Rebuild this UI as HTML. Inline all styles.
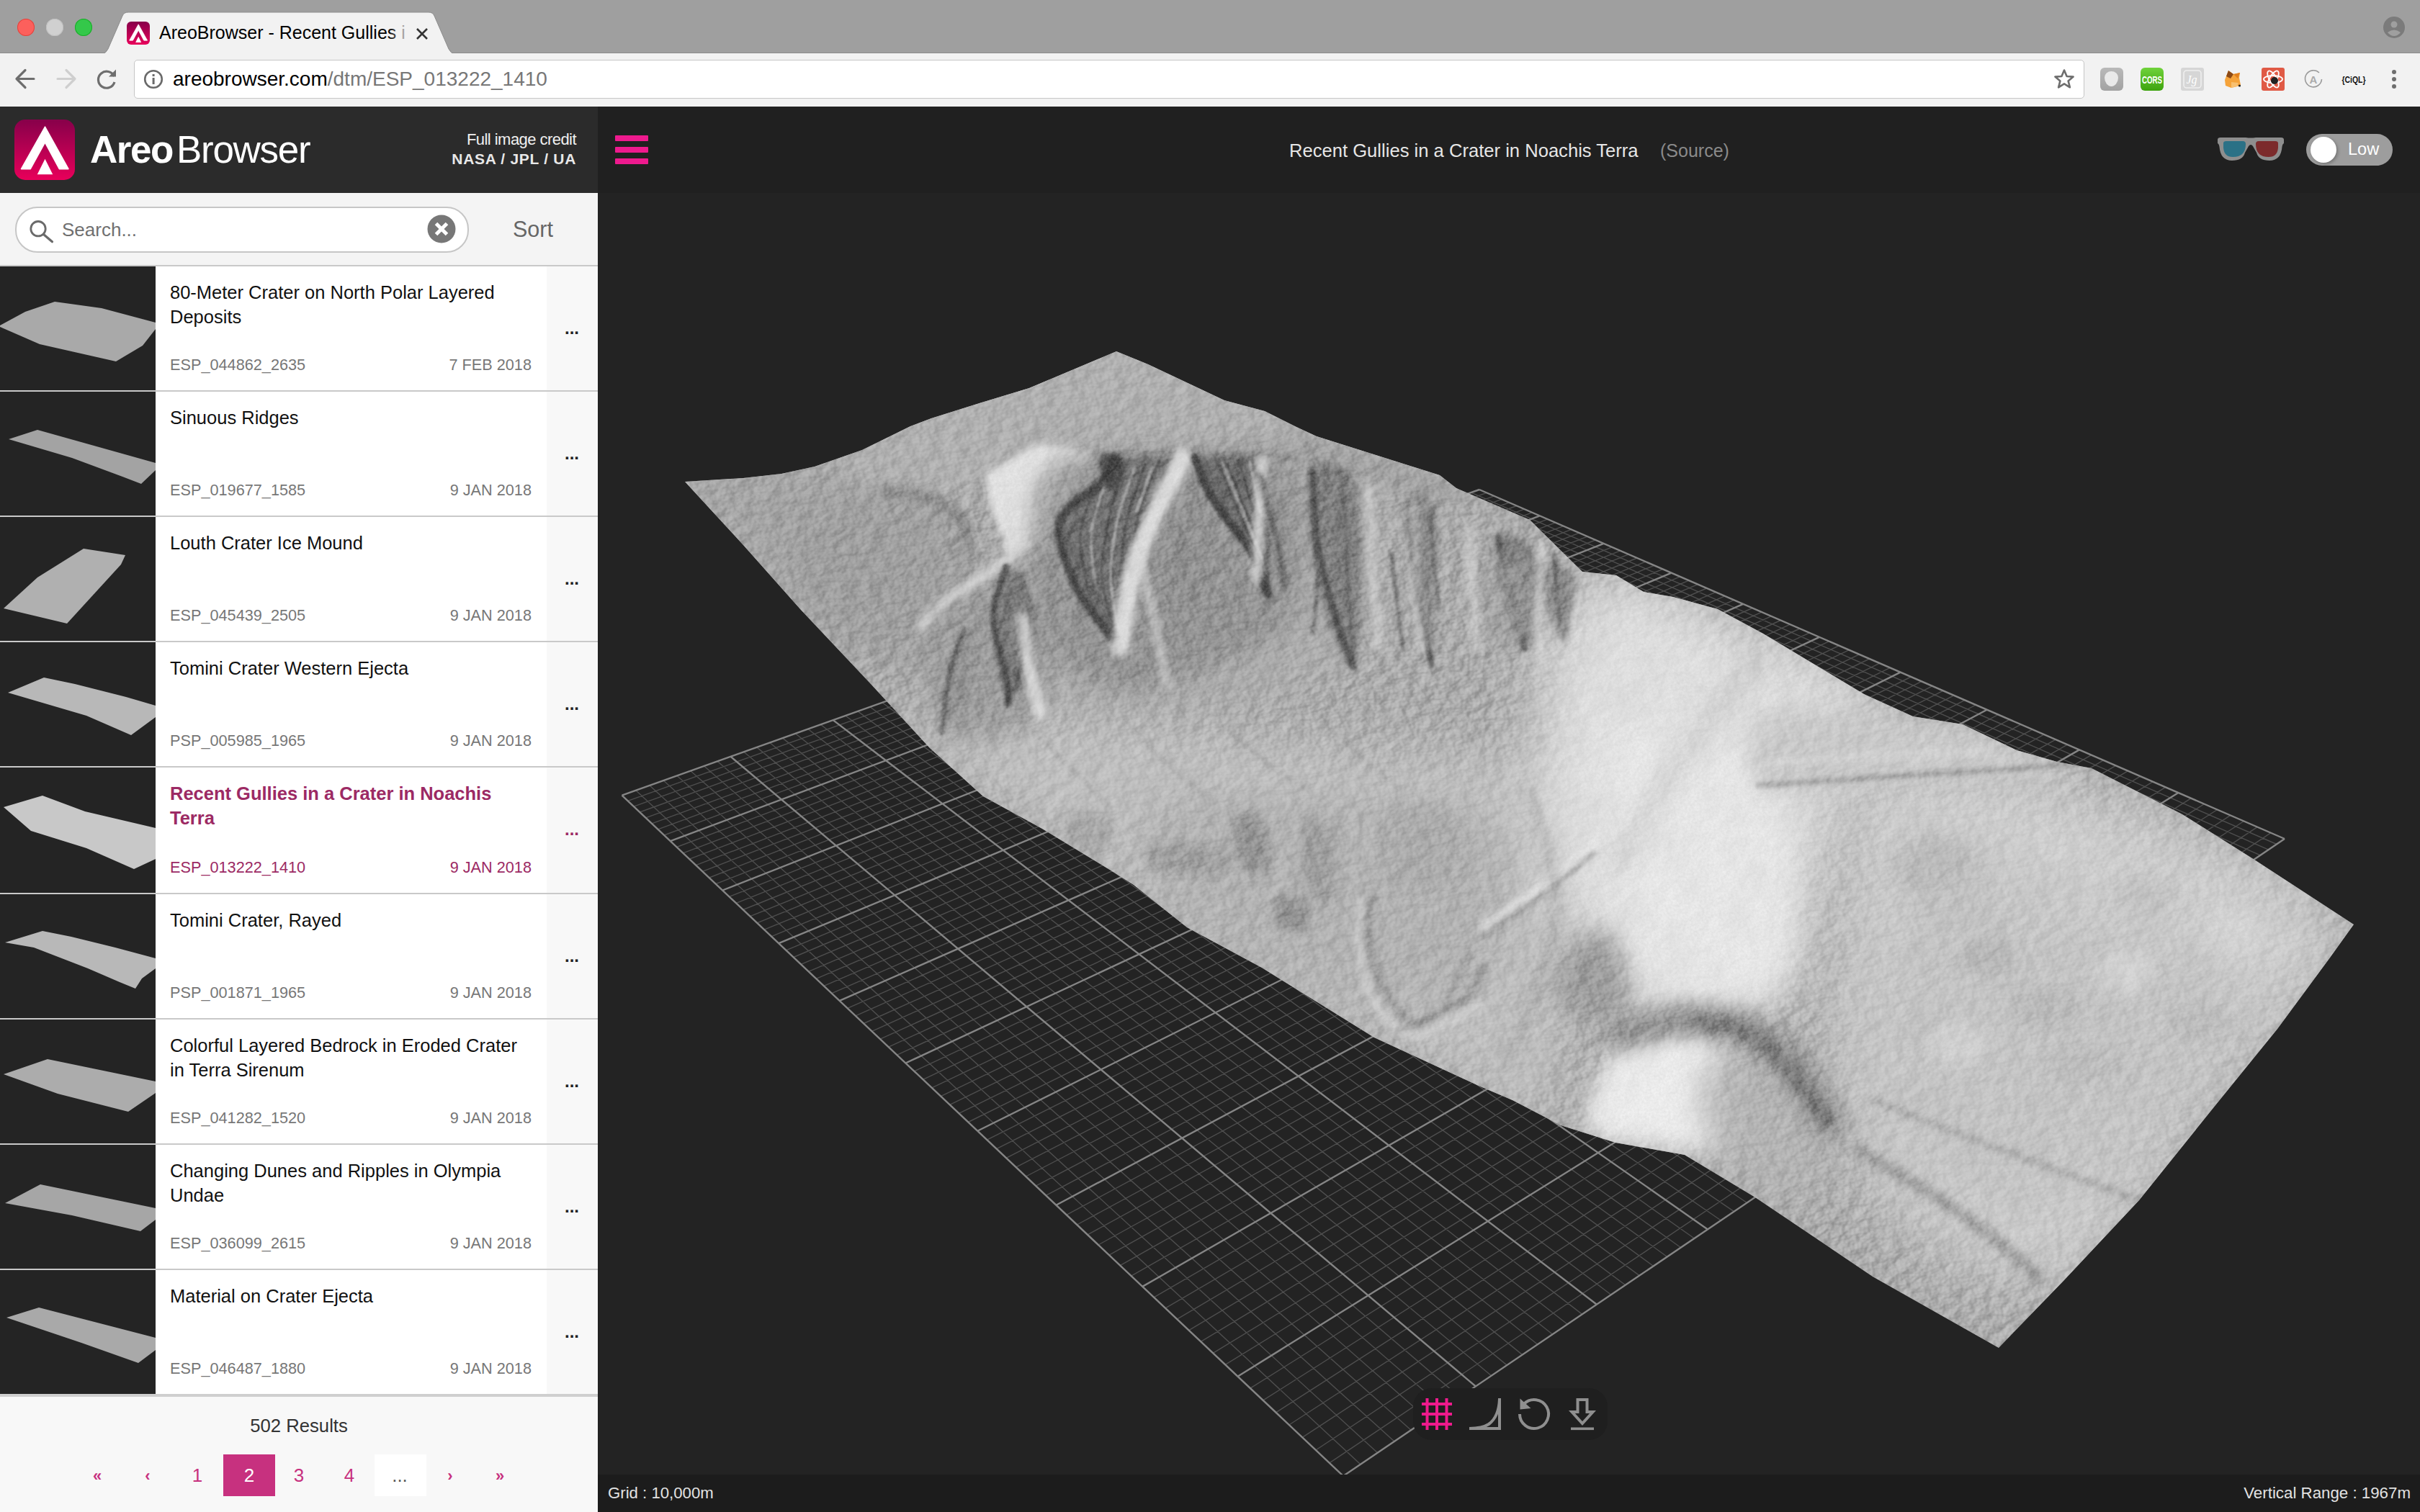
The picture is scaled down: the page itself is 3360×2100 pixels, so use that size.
<!DOCTYPE html>
<html><head><meta charset="utf-8"><title>AreoBrowser</title>
<style>
html,body{margin:0;padding:0;width:3360px;height:2100px;overflow:hidden;background:#232323;font-family:"Liberation Sans", sans-serif;}
.t{position:absolute;line-height:1;white-space:nowrap;}
</style></head><body>
<div style="position:absolute;left:0;top:0;width:3360px;height:74px;background:#9f9f9f"></div>
<div style="position:absolute;left:0;top:73px;width:3360px;height:1px;background:#8c8c8c"></div>
<div style="position:absolute;left:0;top:74px;width:3360px;height:74px;background:#f2f2f2"></div>
<div style="position:absolute;left:24px;top:26px;width:24px;height:24px;border-radius:50%;background:#fc605c;box-shadow:inset 0 0 0 1px #e0443e"></div>
<div style="position:absolute;left:64px;top:26px;width:24px;height:24px;border-radius:50%;background:#d0d0d0;box-shadow:inset 0 0 0 1px #c0c0c0"></div>
<div style="position:absolute;left:104px;top:26px;width:24px;height:24px;border-radius:50%;background:#34c84a;box-shadow:inset 0 0 0 1px #1aab29"></div>
<svg style="position:absolute;left:0;top:0" width="700" height="75"><path d="M142 75 Q147 74 150 68 L170 22 Q172 17 178 17 L595 17 Q601 17 603 22 L623 68 Q626 74 631 75 Z" fill="#f2f2f2" stroke="#8c8c8c" stroke-width="1"/><rect x="130" y="74" width="520" height="2" fill="#f2f2f2"/></svg>
<div style="position:absolute;left:176px;top:30px;width:32px;height:32px;border-radius:6px;background:linear-gradient(#87004a,#e8005a)"></div>
<svg style="position:absolute;left:176px;top:30px" width="32" height="32" viewBox="0 0 83 83"><path d="M42 10 L9.4 67.8 L22 67.8 L42 31.4 L61.6 67.8 L74.1 67.8 Z" fill="#fff" stroke="#fff" stroke-width="2" stroke-linejoin="round"/><path d="M42 54 L31.4 75.4 L52.6 75.4 Z" fill="#fff"/></svg>
<div class="t" style="left:221px;top:32.8px;font-size:25px;color:#000;font-weight:normal;white-space:nowrap;">AreoBrowser - Recent Gullies i</div>

<div style="position:absolute;left:540px;top:28px;width:30px;height:36px;background:linear-gradient(90deg,rgba(242,242,242,0),#f2f2f2)"></div>
<svg style="position:absolute;left:575px;top:36px" width="22" height="22" viewBox="0 0 22 22"><path d="M4 4 L18 18 M18 4 L4 18" stroke="#333" stroke-width="2.6"/></svg>
<svg style="position:absolute;left:20px;top:94px" width="160" height="32" viewBox="0 0 160 32"><path d="M3 15.5 H27 M15 3.5 L3 15.5 L15 27.5" stroke="#6e6e6e" stroke-width="3.2" fill="none" stroke-linecap="round" stroke-linejoin="round"/><path d="M60 15.5 H84 M72 3.5 L84 15.5 L72 27.5" stroke="#cfcfcf" stroke-width="3.2" fill="none" stroke-linecap="round" stroke-linejoin="round"/></svg>
<svg style="position:absolute;left:132px;top:95px" width="34" height="30" viewBox="0 0 34 30"><path d="M26.5 11 A11.5 11.5 0 1 0 27 19" stroke="#6e6e6e" stroke-width="3.2" fill="none"/><path d="M19 11.5 L29 11.5 L29 1.5 Z" fill="#6e6e6e"/></svg>
<div style="position:absolute;left:186px;top:83px;width:2706px;height:52px;background:#fff;border:1px solid #c6c6c6;border-radius:5px"></div>
<svg style="position:absolute;left:199px;top:96px" width="28" height="28" viewBox="0 0 28 28"><circle cx="14" cy="14" r="11.8" stroke="#6a6a6a" stroke-width="2.6" fill="none"/><rect x="12.6" y="12" width="3" height="9" fill="#6a6a6a"/><rect x="12.6" y="7" width="3" height="3" fill="#6a6a6a"/></svg>
<div class="t" style="left:240px;top:96.3px;font-size:28px;color:#000;font-weight:normal;white-space:nowrap;">areobrowser.com<span style="color:#777">/dtm/ESP_013222_1410</span></div>

<svg style="position:absolute;left:2851px;top:95px" width="30" height="30" viewBox="0 0 30 30"><path d="M15 2.5 L18.6 11 L27.6 11.6 L20.6 17.4 L22.9 26.3 L15 21.4 L7.1 26.3 L9.4 17.4 L2.4 11.6 L11.4 11 Z" stroke="#6e6e6e" stroke-width="2.6" fill="none" stroke-linejoin="round"/></svg>
<div style="position:absolute;left:2916px;top:94px;width:32px;height:32px;border-radius:6px;background:linear-gradient(#b9b9b9,#a2a2a2)"></div>
<div style="position:absolute;left:2922px;top:99px;width:19px;height:21px;border-radius:50% 50% 50% 50%/40% 40% 60% 60%;background:#e9e9e9"></div>
<div style="position:absolute;left:2972px;top:94px;width:32px;height:32px;border-radius:6px;background:linear-gradient(#6fd23a,#3ea30f)"></div>
<svg style="position:absolute;left:2972px;top:94px" width="32" height="32"><text x="16" y="22" font-family="Liberation Sans" font-weight="bold" font-size="15" fill="#fff" text-anchor="middle" textLength="28" lengthAdjust="spacingAndGlyphs">CORS</text></svg>
<div style="position:absolute;left:3028px;top:94px;width:32px;height:32px;background:#d6d6d6;border-radius:3px"></div>
<svg style="position:absolute;left:3028px;top:94px" width="32" height="32"><rect x="4" y="4" width="24" height="24" rx="4" fill="none" stroke="#efefef" stroke-width="1.6"/><text x="15" y="22" font-family="Liberation Serif" font-style="italic" font-size="16" fill="#fff" text-anchor="middle">Jg</text></svg>
<svg style="position:absolute;left:3086px;top:96px" width="28" height="28" viewBox="0 0 28 28"><path d="M8 2 L15 7 L24 5 L23 12 L25 22 L20 24 L12 26 L4 23 L3 15 Z" fill="#f5a33a"/><path d="M8 2 L15 7 L11 13 L5 10 Z" fill="#8c4a16"/><path d="M15 7 L24 5 L21 13 Z" fill="#e0801e"/><path d="M12 18 L22 19 L20 24 L12 26 Z" fill="#f8c070"/><circle cx="23.5" cy="23" r="1.6" fill="#222"/></svg>
<div style="position:absolute;left:3140px;top:94px;width:32px;height:32px;background:#e05a45;border-radius:3px"></div>
<svg style="position:absolute;left:3140px;top:94px" width="32" height="32" viewBox="0 0 32 32"><ellipse cx="16" cy="16" rx="13" ry="5" stroke="#fff" stroke-width="1.8" fill="none"/><ellipse cx="16" cy="16" rx="13" ry="5" stroke="#fff" stroke-width="1.8" fill="none" transform="rotate(60 16 16)"/><ellipse cx="16" cy="16" rx="13" ry="5" stroke="#fff" stroke-width="1.8" fill="none" transform="rotate(-60 16 16)"/><circle cx="18" cy="18" r="5" fill="#222"/></svg>
<svg style="position:absolute;left:3198px;top:96px" width="28" height="28" viewBox="0 0 28 28"><path d="M22 5 A11.5 11.5 0 1 0 25.5 14" stroke="#9a9a9a" stroke-width="1.6" fill="none"/><text x="14" y="20" font-family="Liberation Sans" font-weight="bold" font-size="15" fill="#aaa" text-anchor="middle">A</text></svg>
<svg style="position:absolute;left:3250px;top:96px" width="36" height="28"><text x="18" y="19" font-family="Liberation Sans" font-weight="bold" font-size="12" fill="#111" text-anchor="middle" textLength="33" lengthAdjust="spacingAndGlyphs">{CiQL}</text></svg>
<div style="position:absolute;left:3321px;top:97px;width:6px;height:6px;border-radius:50%;background:#6e6e6e"></div>
<div style="position:absolute;left:3321px;top:107px;width:6px;height:6px;border-radius:50%;background:#6e6e6e"></div>
<div style="position:absolute;left:3321px;top:117px;width:6px;height:6px;border-radius:50%;background:#6e6e6e"></div>
<svg style="position:absolute;left:3309px;top:23px" width="30" height="30" viewBox="0 0 30 30"><circle cx="15" cy="15" r="15" fill="#7b7b7b"/><circle cx="15" cy="11" r="4.5" fill="#9f9f9f"/><path d="M6 22 Q15 15 24 22 Q20 27 15 27 Q10 27 6 22Z" fill="#9f9f9f"/></svg>
<div style="position:absolute;left:0;top:148px;width:830px;height:120px;background:#2b2b2b"></div><div style="position:absolute;left:20px;top:166px;width:84px;height:84px;border-radius:15px;background:linear-gradient(#87004a,#e8005a)"></div><svg style="position:absolute;left:20px;top:166px" width="84" height="84" viewBox="0 0 83 83"><path d="M42 10 L9.4 67.8 L22 67.8 L42 31.4 L61.6 67.8 L74.1 67.8 Z" fill="#fff" stroke="#fff" stroke-width="1.5" stroke-linejoin="round"/><path d="M42 54 L31.4 75.4 L52.6 75.4 Z" fill="#fff"/></svg><div class="t" style="left:125px;top:181.1px;font-size:53px;color:#fff;font-weight:bold;letter-spacing:-1.5px;">Areo</div>
<div class="t" style="left:245px;top:181.1px;font-size:53px;color:#fff;font-weight:normal;letter-spacing:-1.3px;">Browser</div>
<div class="t" style="right:2560px;top:183.4px;font-size:22px;color:#f0f0f0;font-weight:normal;letter-spacing:-0.55px;">Full image credit</div>
<div class="t" style="right:2560px;top:210.2px;font-size:21px;color:#e8e8e8;font-weight:bold;letter-spacing:0.7px;">NASA / JPL / UA</div>
<div style="position:absolute;left:0;top:268px;width:830px;height:100px;background:#f4f4f4"></div><div style="position:absolute;left:0;top:368px;width:830px;height:2px;background:#c9c9c9"></div><div style="position:absolute;left:21px;top:287px;width:626px;height:60px;border-radius:31px;background:#fff;border:2px solid #c6c6c6"></div><svg style="position:absolute;left:38px;top:302px" width="40" height="40" viewBox="0 0 40 40"><circle cx="15" cy="15.7" r="10.2" stroke="#6a6a6a" stroke-width="2.8" fill="none"/><path d="M22.5 23.5 L34.5 33.8" stroke="#6a6a6a" stroke-width="3.2" stroke-linecap="round"/></svg><div class="t" style="left:86px;top:305.5px;font-size:26px;color:#707070;font-weight:normal;">Search...</div>
<svg style="position:absolute;left:593px;top:298px" width="40" height="40" viewBox="0 0 40 40"><circle cx="20" cy="20" r="19.5" fill="#777"/><path d="M12.5 12.5 L27.5 27.5 M27.5 12.5 L12.5 27.5" stroke="#fff" stroke-width="5"/></svg><div class="t" style="left:712px;top:302.7px;font-size:30.5px;color:#666;font-weight:normal;">Sort</div>
<div style="position:absolute;left:0;top:370px;width:216px;height:172px;background:#242424"></div><svg style="position:absolute;left:0;top:370px" width="216" height="172"><polygon points="0,82 35,63 76,49 141,58 216,78 216,87 198,110 161,132 55,108 0,84" fill="#a9a9a9"/></svg><div style="position:absolute;left:216px;top:370px;width:543px;height:172px;background:#fff"></div><div style="position:absolute;left:759px;top:370px;width:71px;height:172px;background:#f8f8f8"></div><div style="position:absolute;left:0;top:542px;width:830px;height:2px;background:#c9c9c9"></div><div class="t" style="left:236px;top:393.9px;font-size:25.5px;color:#111;font-weight:normal;white-space:nowrap;">80-Meter Crater on North Polar Layered</div>
<div class="t" style="left:236px;top:427.9px;font-size:25.5px;color:#111;font-weight:normal;white-space:nowrap;">Deposits</div>
<div class="t" style="left:236px;top:495.6px;font-size:21.7px;color:#777;font-weight:normal;">ESP_044862_2635</div>
<div class="t" style="right:2622px;top:495.6px;font-size:21.7px;color:#777;font-weight:normal;">7 FEB 2018</div>
<div class="t" style="left:-206px;width:2000px;text-align:center;top:443.7px;font-size:24px;color:#222;font-weight:bold;">...</div>
<div style="position:absolute;left:0;top:544px;width:216px;height:172px;background:#242424"></div><svg style="position:absolute;left:0;top:544px" width="216" height="172"><polygon points="12,66 52,53 216,99 216,109 196,128 170,118 100,92" fill="#a3a3a3"/></svg><div style="position:absolute;left:216px;top:544px;width:543px;height:172px;background:#fff"></div><div style="position:absolute;left:759px;top:544px;width:71px;height:172px;background:#f8f8f8"></div><div style="position:absolute;left:0;top:716px;width:830px;height:2px;background:#c9c9c9"></div><div class="t" style="left:236px;top:567.9px;font-size:25.5px;color:#111;font-weight:normal;white-space:nowrap;">Sinuous Ridges</div>
<div class="t" style="left:236px;top:669.6px;font-size:21.7px;color:#777;font-weight:normal;">ESP_019677_1585</div>
<div class="t" style="right:2622px;top:669.6px;font-size:21.7px;color:#777;font-weight:normal;">9 JAN 2018</div>
<div class="t" style="left:-206px;width:2000px;text-align:center;top:617.7px;font-size:24px;color:#222;font-weight:bold;">...</div>
<div style="position:absolute;left:0;top:718px;width:216px;height:172px;background:#242424"></div><svg style="position:absolute;left:0;top:718px" width="216" height="172"><polygon points="5,127 52,84 116,44 174,53 168,66 93,148" fill="#b0b0b0"/></svg><div style="position:absolute;left:216px;top:718px;width:543px;height:172px;background:#fff"></div><div style="position:absolute;left:759px;top:718px;width:71px;height:172px;background:#f8f8f8"></div><div style="position:absolute;left:0;top:890px;width:830px;height:2px;background:#c9c9c9"></div><div class="t" style="left:236px;top:741.9px;font-size:25.5px;color:#111;font-weight:normal;white-space:nowrap;">Louth Crater Ice Mound</div>
<div class="t" style="left:236px;top:843.6px;font-size:21.7px;color:#777;font-weight:normal;">ESP_045439_2505</div>
<div class="t" style="right:2622px;top:843.6px;font-size:21.7px;color:#777;font-weight:normal;">9 JAN 2018</div>
<div class="t" style="left:-206px;width:2000px;text-align:center;top:791.7px;font-size:24px;color:#222;font-weight:bold;">...</div>
<div style="position:absolute;left:0;top:892px;width:216px;height:172px;background:#242424"></div><svg style="position:absolute;left:0;top:892px" width="216" height="172"><polygon points="11,70 61,49 104,58 175,76 216,88 216,104 182,129 120,102" fill="#b8b8b8"/></svg><div style="position:absolute;left:216px;top:892px;width:543px;height:172px;background:#fff"></div><div style="position:absolute;left:759px;top:892px;width:71px;height:172px;background:#f8f8f8"></div><div style="position:absolute;left:0;top:1064px;width:830px;height:2px;background:#c9c9c9"></div><div class="t" style="left:236px;top:915.9px;font-size:25.5px;color:#111;font-weight:normal;white-space:nowrap;">Tomini Crater Western Ejecta</div>
<div class="t" style="left:236px;top:1017.6px;font-size:21.7px;color:#777;font-weight:normal;">PSP_005985_1965</div>
<div class="t" style="right:2622px;top:1017.6px;font-size:21.7px;color:#777;font-weight:normal;">9 JAN 2018</div>
<div class="t" style="left:-206px;width:2000px;text-align:center;top:965.7px;font-size:24px;color:#222;font-weight:bold;">...</div>
<div style="position:absolute;left:0;top:1066px;width:216px;height:174px;background:#242424"></div><svg style="position:absolute;left:0;top:1066px" width="216" height="172"><polygon points="5,55 59,39 118,61 216,84 216,127 186,141 120,112 43,88" fill="#c8c8c8"/></svg><div style="position:absolute;left:216px;top:1066px;width:543px;height:174px;background:#fff"></div><div style="position:absolute;left:759px;top:1066px;width:71px;height:174px;background:#f8f8f8"></div><div style="position:absolute;left:0;top:1240px;width:830px;height:2px;background:#c9c9c9"></div><div class="t" style="left:236px;top:1089.9px;font-size:25.5px;color:#9c2a64;font-weight:bold;white-space:nowrap;">Recent Gullies in a Crater in Noachis</div>
<div class="t" style="left:236px;top:1123.9px;font-size:25.5px;color:#9c2a64;font-weight:bold;white-space:nowrap;">Terra</div>
<div class="t" style="left:236px;top:1193.6px;font-size:21.7px;color:#9c2a64;font-weight:normal;">ESP_013222_1410</div>
<div class="t" style="right:2622px;top:1193.6px;font-size:21.7px;color:#9c2a64;font-weight:normal;">9 JAN 2018</div>
<div class="t" style="left:-206px;width:2000px;text-align:center;top:1139.7px;font-size:24px;color:#9c2a64;font-weight:bold;">...</div>
<div style="position:absolute;left:0;top:1242px;width:216px;height:172px;background:#242424"></div><svg style="position:absolute;left:0;top:1242px" width="216" height="172"><polygon points="7,67 59,51 99,59 160,74 216,89 216,103 197,117 188,131 166,122 122,103 47,74" fill="#b8b8b8"/></svg><div style="position:absolute;left:216px;top:1242px;width:543px;height:172px;background:#fff"></div><div style="position:absolute;left:759px;top:1242px;width:71px;height:172px;background:#f8f8f8"></div><div style="position:absolute;left:0;top:1414px;width:830px;height:2px;background:#c9c9c9"></div><div class="t" style="left:236px;top:1265.9px;font-size:25.5px;color:#111;font-weight:normal;white-space:nowrap;">Tomini Crater, Rayed</div>
<div class="t" style="left:236px;top:1367.6px;font-size:21.7px;color:#777;font-weight:normal;">PSP_001871_1965</div>
<div class="t" style="right:2622px;top:1367.6px;font-size:21.7px;color:#777;font-weight:normal;">9 JAN 2018</div>
<div class="t" style="left:-206px;width:2000px;text-align:center;top:1315.7px;font-size:24px;color:#222;font-weight:bold;">...</div>
<div style="position:absolute;left:0;top:1416px;width:216px;height:172px;background:#242424"></div><svg style="position:absolute;left:0;top:1416px" width="216" height="172"><polygon points="5,76 66,55 216,86 216,102 178,128 80,103" fill="#acacac"/></svg><div style="position:absolute;left:216px;top:1416px;width:543px;height:172px;background:#fff"></div><div style="position:absolute;left:759px;top:1416px;width:71px;height:172px;background:#f8f8f8"></div><div style="position:absolute;left:0;top:1588px;width:830px;height:2px;background:#c9c9c9"></div><div class="t" style="left:236px;top:1439.9px;font-size:25.5px;color:#111;font-weight:normal;white-space:nowrap;">Colorful Layered Bedrock in Eroded Crater</div>
<div class="t" style="left:236px;top:1473.9px;font-size:25.5px;color:#111;font-weight:normal;white-space:nowrap;">in Terra Sirenum</div>
<div class="t" style="left:236px;top:1541.6px;font-size:21.7px;color:#777;font-weight:normal;">ESP_041282_1520</div>
<div class="t" style="right:2622px;top:1541.6px;font-size:21.7px;color:#777;font-weight:normal;">9 JAN 2018</div>
<div class="t" style="left:-206px;width:2000px;text-align:center;top:1489.7px;font-size:24px;color:#222;font-weight:bold;">...</div>
<div style="position:absolute;left:0;top:1590px;width:216px;height:172px;background:#242424"></div><svg style="position:absolute;left:0;top:1590px" width="216" height="172"><polygon points="7,81 56,55 216,88 216,104 195,120 100,98" fill="#a6a6a6"/></svg><div style="position:absolute;left:216px;top:1590px;width:543px;height:172px;background:#fff"></div><div style="position:absolute;left:759px;top:1590px;width:71px;height:172px;background:#f8f8f8"></div><div style="position:absolute;left:0;top:1762px;width:830px;height:2px;background:#c9c9c9"></div><div class="t" style="left:236px;top:1613.9px;font-size:25.5px;color:#111;font-weight:normal;white-space:nowrap;">Changing Dunes and Ripples in Olympia</div>
<div class="t" style="left:236px;top:1647.9px;font-size:25.5px;color:#111;font-weight:normal;white-space:nowrap;">Undae</div>
<div class="t" style="left:236px;top:1715.6px;font-size:21.7px;color:#777;font-weight:normal;">ESP_036099_2615</div>
<div class="t" style="right:2622px;top:1715.6px;font-size:21.7px;color:#777;font-weight:normal;">9 JAN 2018</div>
<div class="t" style="left:-206px;width:2000px;text-align:center;top:1663.7px;font-size:24px;color:#222;font-weight:bold;">...</div>
<div style="position:absolute;left:0;top:1764px;width:216px;height:172px;background:#242424"></div><svg style="position:absolute;left:0;top:1764px" width="216" height="172"><polygon points="9,66 54,52 216,94 216,111 192,129 113,101" fill="#a9a9a9"/></svg><div style="position:absolute;left:216px;top:1764px;width:543px;height:172px;background:#fff"></div><div style="position:absolute;left:759px;top:1764px;width:71px;height:172px;background:#f8f8f8"></div><div class="t" style="left:236px;top:1787.9px;font-size:25.5px;color:#111;font-weight:normal;white-space:nowrap;">Material on Crater Ejecta</div>
<div class="t" style="left:236px;top:1889.6px;font-size:21.7px;color:#777;font-weight:normal;">ESP_046487_1880</div>
<div class="t" style="right:2622px;top:1889.6px;font-size:21.7px;color:#777;font-weight:normal;">9 JAN 2018</div>
<div class="t" style="left:-206px;width:2000px;text-align:center;top:1837.7px;font-size:24px;color:#222;font-weight:bold;">...</div>
<div style="position:absolute;left:0;top:1936px;width:830px;height:164px;background:#f8f8f8"></div><div style="position:absolute;left:0;top:1936px;width:830px;height:4px;background:#cfcfcf"></div><div class="t" style="left:-585px;width:2000px;text-align:center;top:1968.2px;font-size:25.7px;color:#333;font-weight:normal;">502 Results</div>
<div class="t" style="left:-865px;width:2000px;text-align:center;top:2039.4px;font-size:22px;color:#c7317f;font-weight:bold;">«</div>
<div class="t" style="left:-795px;width:2000px;text-align:center;top:2039.4px;font-size:22px;color:#c7317f;font-weight:bold;">‹</div>
<div class="t" style="left:-726px;width:2000px;text-align:center;top:2036.0px;font-size:26px;color:#c7317f;font-weight:normal;">1</div>
<div style="position:absolute;left:310px;top:2020px;width:72px;height:58px;background:#c7317f"></div><div class="t" style="left:-654px;width:2000px;text-align:center;top:2036.0px;font-size:26px;color:#fff;font-weight:normal;">2</div>
<div class="t" style="left:-585px;width:2000px;text-align:center;top:2036.0px;font-size:26px;color:#c7317f;font-weight:normal;">3</div>
<div class="t" style="left:-515px;width:2000px;text-align:center;top:2036.0px;font-size:26px;color:#c7317f;font-weight:normal;">4</div>
<div style="position:absolute;left:520px;top:2020px;width:72px;height:58px;background:#fff"></div><div class="t" style="left:-445px;width:2000px;text-align:center;top:2036.0px;font-size:26px;color:#555;font-weight:normal;">...</div>
<div class="t" style="left:-375px;width:2000px;text-align:center;top:2039.4px;font-size:22px;color:#c7317f;font-weight:bold;">›</div>
<div class="t" style="left:-306px;width:2000px;text-align:center;top:2039.4px;font-size:22px;color:#c7317f;font-weight:bold;">»</div>

<div style="position:absolute;left:830px;top:148px;width:2530px;height:120px;background:#202020"></div><div style="position:absolute;left:854px;top:188px;width:46px;height:8px;border-radius:1px;background:#ee1a8e"></div><div style="position:absolute;left:854px;top:204px;width:46px;height:8px;border-radius:1px;background:#ee1a8e"></div><div style="position:absolute;left:854px;top:220px;width:46px;height:8px;border-radius:1px;background:#ee1a8e"></div><div class="t" style="left:1790px;top:196.6px;font-size:25.6px;color:#e6e6e6;font-weight:normal;white-space:nowrap;">Recent Gullies in a Crater in Noachis Terra</div>
<div class="t" style="left:2305px;top:197.1px;font-size:25px;color:#8a8a8a;font-weight:normal;">(Source)</div>
<svg style="position:absolute;left:3078px;top:190px" width="94" height="36" viewBox="0 0 94 36"><path d="M1 4 Q1 1 5 1 L40 1 Q47 2 54 1 L89 1 Q93 1 93 4 L93 9 Q91 10 90.5 14 Q89 33 73 33 Q58 33 55 22 L50 13 Q47 9 44 13 L39 22 Q36 33 21 33 Q5 33 3.5 14 Q3 10 1 9 Z" fill="#8e8e8e"/><path d="M9 9 Q9 6 13 6 L36 6 Q40 6 40 10 Q40 28 22 28 Q10 28 9 15 Z" fill="#2b7186"/><path d="M85 9 Q85 6 81 6 L58 6 Q54 6 54 10 Q54 28 72 28 Q84 28 85 15 Z" fill="#7c2b2c"/></svg><div style="position:absolute;left:3202px;top:186px;width:120px;height:44px;border-radius:22px;background:#9d9d9d"></div><div style="position:absolute;left:3208px;top:190px;width:36px;height:36px;border-radius:50%;background:#fff;box-shadow:2px 2px 4px rgba(0,0,0,0.25)"></div><div class="t" style="left:3260px;top:195.8px;font-size:23.6px;color:#fff;font-weight:normal;">Low</div>
<div style="position:absolute;left:830px;top:268px;width:2530px;height:1780px;background:#232323"></div><svg style="position:absolute;left:0;top:0" width="3360" height="2100" viewBox="0 0 3360 2100">
<defs><clipPath id="cv"><rect x="830" y="268" width="2530" height="1780"/></clipPath></defs>
<g clip-path="url(#cv)">
<path d="M871.7 1112.4L2064.2 684.4M882.9 1097.8L1888.9 2033.8M879.9 1120.2L2074.6 688.9M902.1 1090.9L1912.6 2017.8M888.2 1128.0L2085.0 693.4M921.2 1084.1L1936.0 2001.9M896.5 1135.9L2095.4 698.0M940.1 1077.4L1959.1 1986.3M905.0 1143.9L2105.9 702.5M958.9 1070.7L1981.9 1970.8M913.5 1151.9L2116.5 707.1M977.6 1064.0L2004.5 1955.5M922.1 1160.0L2127.2 711.8M996.1 1057.4L2026.8 1940.4M939.5 1176.5L2148.8 721.1M1032.7 1044.3L2070.7 1910.7M948.4 1184.8L2159.7 725.8M1050.8 1037.9L2092.3 1896.1M957.3 1193.2L2170.7 730.6M1068.8 1031.5L2113.7 1881.6M966.3 1201.7L2181.7 735.4M1086.6 1025.1L2134.8 1867.3M975.4 1210.3L2192.8 740.2M1104.3 1018.8L2155.6 1853.2M984.6 1219.0L2204.1 745.1M1121.9 1012.5L2176.3 1839.2M993.8 1227.7L2215.3 750.0M1139.4 1006.3L2196.7 1825.4M1012.6 1245.4L2238.2 759.9M1173.9 994.0L2236.9 1798.2M1022.1 1254.4L2249.7 764.9M1191.0 987.9L2256.7 1784.8M1031.7 1263.5L2261.3 769.9M1207.9 981.8L2276.2 1771.6M1041.4 1272.7L2273.0 775.0M1224.8 975.8L2295.6 1758.5M1051.2 1281.9L2284.8 780.1M1241.5 969.9L2314.7 1745.5M1061.1 1291.2L2296.7 785.3M1258.1 963.9L2333.7 1732.7M1071.1 1300.7L2308.6 790.5M1274.6 958.1L2352.4 1720.0M1091.4 1319.8L2332.8 800.9M1307.2 946.4L2389.3 1695.0M1101.7 1329.5L2345.0 806.2M1323.3 940.7L2407.5 1682.7M1112.1 1339.4L2357.3 811.6M1339.4 934.9L2425.5 1670.5M1122.6 1349.3L2369.7 817.0M1355.3 929.3L2443.3 1658.4M1133.2 1359.3L2382.2 822.4M1371.1 923.6L2460.9 1646.5M1143.9 1369.4L2394.8 827.8M1386.8 918.0L2478.4 1634.7M1154.8 1379.6L2407.5 833.3M1402.4 912.5L2495.6 1623.0M1176.7 1400.4L2433.1 844.5M1433.2 901.5L2529.7 1599.9M1187.9 1410.9L2446.1 850.1M1448.5 896.0L2546.4 1588.6M1199.2 1421.5L2459.2 855.8M1463.7 890.6L2563.0 1577.3M1210.6 1432.3L2472.4 861.5M1478.7 885.2L2579.5 1566.2M1222.1 1443.2L2485.6 867.2M1493.7 879.9L2595.8 1555.2M1233.7 1454.1L2499.0 873.0M1508.6 874.6L2611.9 1544.3M1245.5 1465.2L2512.5 878.9M1523.3 869.3L2627.8 1533.5M1269.4 1487.8L2539.8 890.7M1552.6 858.9L2659.3 1512.1M1281.5 1499.3L2553.6 896.7M1567.0 853.7L2674.8 1501.6M1293.8 1510.8L2567.5 902.7M1581.4 848.6L2690.2 1491.2M1306.2 1522.6L2581.5 908.8M1595.7 843.5L2705.4 1480.9M1318.7 1534.4L2595.6 915.0M1609.9 838.4L2720.5 1470.7M1331.4 1546.4L2609.8 921.1M1624.0 833.4L2735.5 1460.6M1344.2 1558.5L2624.2 927.4M1638.0 828.4L2750.3 1450.6M1370.3 1583.1L2653.3 940.0M1665.7 818.5L2779.5 1430.8M1383.6 1595.6L2668.0 946.3M1679.5 813.6L2793.8 1421.1M1397.0 1608.3L2682.8 952.8M1693.1 808.7L2808.1 1411.4M1410.6 1621.1L2697.7 959.3M1706.7 803.9L2822.3 1401.8M1424.3 1634.0L2712.8 965.8M1720.1 799.1L2836.3 1392.3M1438.1 1647.1L2728.0 972.4M1733.5 794.3L2850.2 1382.9M1452.2 1660.3L2743.3 979.0M1746.8 789.6L2863.9 1373.6M1480.7 1687.3L2774.3 992.5M1773.2 780.2L2891.1 1355.2M1495.3 1701.0L2790.0 999.3M1786.2 775.5L2904.5 1346.2M1510.0 1714.9L2805.8 1006.2M1799.2 770.9L2917.7 1337.2M1524.9 1729.0L2821.8 1013.1M1812.1 766.3L2930.9 1328.2M1539.9 1743.2L2837.9 1020.1M1824.9 761.7L2944.0 1319.4M1555.2 1757.6L2854.1 1027.1M1837.6 757.2L2956.9 1310.6M1570.6 1772.1L2870.5 1034.2M1850.3 752.7L2969.7 1302.0M1602.1 1801.8L2903.7 1048.6M1875.4 743.7L2995.1 1284.8M1618.1 1816.9L2920.5 1055.9M1887.8 739.3L3007.6 1276.4M1634.3 1832.2L2937.5 1063.3M1900.1 734.9L3019.9 1268.0M1650.7 1847.7L2954.6 1070.7M1912.4 730.5L3032.2 1259.6M1667.3 1863.4L2971.8 1078.2M1924.6 726.2L3044.4 1251.4M1684.1 1879.3L2989.2 1085.7M1936.7 721.8L3056.5 1243.2M1701.2 1895.4L3006.7 1093.3M1948.8 717.5L3068.5 1235.1M1735.9 1928.2L3042.3 1108.7M1972.6 709.0L3092.2 1219.1M1753.7 1944.9L3060.4 1116.6M1984.5 704.8L3103.8 1211.2M1771.6 1961.8L3078.5 1124.5M1996.2 700.6L3115.4 1203.3M1789.8 1979.0L3096.9 1132.4M2007.9 696.4L3126.9 1195.5M1808.2 1996.4L3115.4 1140.5M2019.5 692.3L3138.3 1187.8M1826.9 2014.0L3134.1 1148.6M2031.1 688.2L3149.6 1180.1M1845.8 2031.9L3153.0 1156.7M2042.6 684.1L3160.9 1172.5" stroke="#4e4e4e" stroke-width="1.4" fill="none"/>
<path d="M863.5 1104.7L2054.0 680.0M863.5 1104.7L1865.0 2050.0M930.8 1168.2L2138.0 716.4M1014.5 1050.8L2048.9 1925.5M1003.2 1236.5L2226.7 754.9M1156.7 1000.1L2216.9 1811.7M1081.2 1310.2L2320.7 795.7M1290.9 952.2L2371.0 1707.4M1165.7 1389.9L2420.3 838.9M1417.8 906.9L2512.7 1611.4M1257.4 1476.5L2526.1 884.8M1538.0 864.1L2643.7 1522.8M1357.2 1570.7L2638.7 933.6M1651.9 823.4L2764.9 1440.6M1466.4 1673.7L2758.7 985.7M1760.0 784.9L2877.6 1364.4M1586.2 1786.9L2887.0 1041.4M1862.9 748.2L2982.4 1293.4M1718.4 1911.7L3024.5 1101.0M1960.7 713.3L3080.4 1227.0M1865.0 2050.0L3172.0 1165.0M2054.0 680.0L3172.0 1165.0" stroke="#858585" stroke-width="2.4" fill="none"/>
<defs><clipPath id="terr"><path d="M951 669 L1032 664 L1085 658 L1131 648 L1197 625 L1264 592 L1293 581 L1363 559 L1429 539 L1512 504 L1550 488 L1594 506 L1700 556 L1756 571 L1800 593 L1828 606 L1999 660 L2022 678 L2124 722 L2197 794 L2244 799 L2282 822 L2323 829 L2385 846 L2448 880 L2588 964 L2656 995 L2725 1006 L2800 1042 L2856 1058 L2904 1067 L3030 1131 L3130 1194 L3268 1284 L3235 1330 L3162 1429 L3076 1535 L2970 1667 L2864 1780 L2775 1872 L2600 1773 L2437 1663 L2339 1604 L2243 1587 L2167 1563 L2100 1528 L2053 1508 L1908 1441 L1752 1344 L1648 1288 L1574 1229 L1544 1210 L1447 1151 L1365 1106 L1291 1039 L1209 950 L1112 847 L1032 757 Z"/></clipPath><filter id="b1" filterUnits="userSpaceOnUse" x="830" y="268" width="2530" height="1780"><feGaussianBlur stdDeviation="1"/></filter><filter id="b2" filterUnits="userSpaceOnUse" x="830" y="268" width="2530" height="1780"><feGaussianBlur stdDeviation="2"/></filter><filter id="b3" filterUnits="userSpaceOnUse" x="830" y="268" width="2530" height="1780"><feGaussianBlur stdDeviation="3"/></filter><filter id="b4" filterUnits="userSpaceOnUse" x="830" y="268" width="2530" height="1780"><feGaussianBlur stdDeviation="4"/></filter><filter id="b5" filterUnits="userSpaceOnUse" x="830" y="268" width="2530" height="1780"><feGaussianBlur stdDeviation="5"/></filter><filter id="b6" filterUnits="userSpaceOnUse" x="830" y="268" width="2530" height="1780"><feGaussianBlur stdDeviation="6"/></filter><filter id="b8" filterUnits="userSpaceOnUse" x="830" y="268" width="2530" height="1780"><feGaussianBlur stdDeviation="8"/></filter><filter id="b10" filterUnits="userSpaceOnUse" x="830" y="268" width="2530" height="1780"><feGaussianBlur stdDeviation="10"/></filter><filter id="b12" filterUnits="userSpaceOnUse" x="830" y="268" width="2530" height="1780"><feGaussianBlur stdDeviation="12"/></filter><filter id="b16" filterUnits="userSpaceOnUse" x="830" y="268" width="2530" height="1780"><feGaussianBlur stdDeviation="16"/></filter><filter id="b25" filterUnits="userSpaceOnUse" x="830" y="268" width="2530" height="1780"><feGaussianBlur stdDeviation="25"/></filter><filter id="b30" filterUnits="userSpaceOnUse" x="830" y="268" width="2530" height="1780"><feGaussianBlur stdDeviation="30"/></filter><filter id="b40" filterUnits="userSpaceOnUse" x="830" y="268" width="2530" height="1780"><feGaussianBlur stdDeviation="40"/></filter><filter id="grain" x="0" y="0" width="100%" height="100%"><feTurbulence type="fractalNoise" baseFrequency="0.3" numOctaves="2" seed="3"/><feColorMatrix values="0 0 0 0 0.5  0 0 0 0 0.5  0 0 0 0 0.5  0 0 0 1.4 -0.45"/></filter><filter id="mottle" x="0" y="0" width="100%" height="100%"><feTurbulence type="fractalNoise" baseFrequency="0.02" numOctaves="3" seed="7"/><feColorMatrix values="0 0 0 0 0.3  0 0 0 0 0.3  0 0 0 0 0.3  0 0 0 2.2 -0.9"/></filter><filter id="relief" filterUnits="userSpaceOnUse" x="900" y="450" width="2400" height="1450" color-interpolation-filters="sRGB"><feTurbulence type="fractalNoise" baseFrequency="0.05 0.07" numOctaves="3" seed="11" result="n"/><feDiffuseLighting in="n" surfaceScale="5" diffuseConstant="1" lighting-color="#fff" result="l"><feDistantLight azimuth="200" elevation="30"/></feDiffuseLighting><feColorMatrix type="saturate" values="0"/></filter></defs><path d="M951 669 L1032 664 L1085 658 L1131 648 L1197 625 L1264 592 L1293 581 L1363 559 L1429 539 L1512 504 L1550 488 L1594 506 L1700 556 L1756 571 L1800 593 L1828 606 L1999 660 L2022 678 L2124 722 L2197 794 L2244 799 L2282 822 L2323 829 L2385 846 L2448 880 L2588 964 L2656 995 L2725 1006 L2800 1042 L2856 1058 L2904 1067 L3030 1131 L3130 1194 L3268 1284 L3235 1330 L3162 1429 L3076 1535 L2970 1667 L2864 1780 L2775 1872 L2600 1773 L2437 1663 L2339 1604 L2243 1587 L2167 1563 L2100 1528 L2053 1508 L1908 1441 L1752 1344 L1648 1288 L1574 1229 L1544 1210 L1447 1151 L1365 1106 L1291 1039 L1209 950 L1112 847 L1032 757 Z" fill="#b8b8b8"/><g clip-path="url(#terr)"><g filter="url(#b25)"><path d="M940 669 C963.3 651.2 1110.0 646.5 1160 650 C1210.0 653.5 1215.0 670.0 1240 690 C1265.0 710.0 1308.3 738.3 1310 770 C1311.7 801.7 1283.0 867.2 1250 880 C1217.0 892.8 1150.3 867.5 1112 847 C1073.7 826.5 1048.7 786.7 1020 757 C991.3 727.3 916.7 686.8 940 669 Z" fill="#a4a4a4" opacity="1.0"/></g><g filter="url(#b16)"><path d="M1160 640 C1165.7 622.5 1199.0 611.7 1264 585 C1329.0 558.3 1455.7 477.5 1550 480 C1644.3 482.5 1755.0 570.8 1830 600 C1905.0 629.2 1988.3 640.8 2000 655 C2011.7 669.2 1950.0 685.0 1900 685 C1850.0 685.0 1766.7 660.8 1700 655 C1633.3 649.2 1556.7 647.5 1500 650 C1443.3 652.5 1405.0 663.3 1360 670 C1315.0 676.7 1263.3 695.0 1230 690 C1196.7 685.0 1154.3 657.5 1160 640 Z" fill="#b0b0b0" opacity="1.0"/></g><g filter="url(#b25)"><path d="M1470 650 C1541.7 623.3 1758.3 631.7 1830 640 C1901.7 648.3 1891.7 656.7 1900 700 C1908.3 743.3 1913.3 851.7 1880 900 C1846.7 948.3 1763.3 975.0 1700 990 C1636.7 1005.0 1561.7 995.0 1500 990 C1438.3 985.0 1346.7 991.7 1330 960 C1313.3 928.3 1376.7 851.7 1400 800 C1423.3 748.3 1398.3 676.7 1470 650 Z" fill="#acacac" opacity="1.0"/></g><g filter="url(#b30)"><path d="M1300 990 C1351.5 985.2 1500.0 1001.7 1600 1010 C1700.0 1018.3 1808.3 1031.7 1900 1040 C1991.7 1048.3 2100.0 1033.3 2150 1060 C2200.0 1086.7 2200.0 1120.0 2200 1200 C2200.0 1280.0 2175.0 1488.7 2150 1540 C2125.0 1591.3 2116.7 1540.7 2050 1508 C1983.3 1475.3 1850.0 1403.7 1750 1344 C1650.0 1284.3 1526.5 1200.8 1450 1150 C1373.5 1099.2 1316.0 1065.7 1291 1039 C1266.0 1012.3 1248.5 994.8 1300 990 Z" fill="#c0c0c0" opacity="1.0"/></g><g filter="url(#b40)"><path d="M2200 810 C2253.3 776.7 2383.3 853.3 2450 880 C2516.7 906.7 2581.7 933.3 2600 970 C2618.3 1006.7 2576.7 1045.0 2560 1100 C2543.3 1155.0 2523.3 1246.7 2500 1300 C2476.7 1353.3 2456.7 1398.3 2420 1420 C2383.3 1441.7 2320.0 1450.0 2280 1430 C2240.0 1410.0 2205.0 1358.3 2180 1300 C2155.0 1241.7 2126.7 1161.7 2130 1080 C2133.3 998.3 2146.7 843.3 2200 810 Z" fill="#e2e2e2" opacity="1.0"/></g><g filter="url(#b25)"><path d="M2238 1032 C2264.7 998.7 2360.3 980.3 2400 1000 C2439.7 1019.7 2463.3 1087.3 2476 1150 C2488.7 1212.7 2505.3 1342.7 2476 1376 C2446.7 1409.3 2339.3 1379.3 2300 1350 C2260.7 1320.7 2250.3 1253.0 2240 1200 C2229.7 1147.0 2211.3 1065.3 2238 1032 Z" fill="#ebebeb" opacity="1.0"/></g><g filter="url(#b16)"><path d="M2259 1440 C2288.7 1420.0 2349.5 1420.0 2378 1440 C2406.5 1460.0 2426.3 1533.3 2430 1560 C2433.7 1586.7 2428.3 1595.0 2400 1600 C2371.7 1605.0 2293.3 1596.7 2260 1590 C2226.7 1583.3 2200.2 1585.0 2200 1560 C2199.8 1535.0 2229.3 1460.0 2259 1440 Z" fill="#f0f0f0" opacity="1.0"/></g><g filter="url(#b40)"><path d="M2590 1080 C2630.0 1051.7 2726.7 1068.3 2800 1080 C2873.3 1091.7 2955.0 1115.0 3030 1150 C3105.0 1185.0 3242.3 1225.8 3250 1290 C3257.7 1354.2 3140.3 1453.3 3076 1535 C3011.7 1616.7 2940.0 1755.8 2864 1780 C2788.0 1804.2 2674.0 1730.0 2620 1680 C2566.0 1630.0 2550.0 1551.7 2540 1480 C2530.0 1408.3 2551.7 1316.7 2560 1250 C2568.3 1183.3 2550.0 1108.3 2590 1080 Z" fill="#d0d0d0" opacity="1.0"/><path d="M2660 1230 C2725.0 1201.7 2868.3 1255.0 2950 1280 C3031.7 1305.0 3141.7 1326.7 3150 1380 C3158.3 1433.3 3058.3 1546.7 3000 1600 C2941.7 1653.3 2866.7 1700.0 2800 1700 C2733.3 1700.0 2640.0 1641.7 2600 1600 C2560.0 1558.3 2550.0 1511.7 2560 1450 C2570.0 1388.3 2595.0 1258.3 2660 1230 Z" fill="#c6c6c6" opacity="1.0"/></g><g filter="url(#b16)"><path d="M2456 990 C2497.7 974.2 2633.2 988.3 2700 1000 C2766.8 1011.7 2832.0 1045.0 2857 1060 C2882.0 1075.0 2892.8 1084.2 2850 1090 C2807.2 1095.8 2666.7 1094.2 2600 1095 C2533.3 1095.8 2474.0 1112.5 2450 1095 C2426.0 1077.5 2414.3 1005.8 2456 990 Z" fill="#cbcbcb" opacity="1.0"/></g><g filter="url(#b25)"><path d="M2645 1157 C2663.7 1143.7 2741.2 1162.8 2762 1180 C2782.8 1197.2 2788.7 1246.7 2770 1260 C2751.3 1273.3 2670.8 1277.2 2650 1260 C2629.2 1242.8 2626.3 1170.3 2645 1157 Z" fill="#c0c0c0" opacity="0.7"/></g><g filter="url(#b16)"><path d="M2179 1310 C2192.2 1296.7 2225.5 1285.0 2239 1300 C2252.5 1315.0 2266.5 1380.0 2260 1400 C2253.5 1420.0 2216.7 1423.3 2200 1420 C2183.3 1416.7 2163.5 1398.3 2160 1380 C2156.5 1361.7 2165.8 1323.3 2179 1310 Z" fill="#9c9c9c" opacity="1.0"/></g><g filter="url(#b25)"><path d="M2378 1468 C2397.5 1451.3 2470.0 1471.3 2497 1500 C2524.0 1528.7 2549.5 1613.3 2540 1640 C2530.5 1666.7 2466.7 1666.7 2440 1660 C2413.3 1653.3 2390.3 1632.0 2380 1600 C2369.7 1568.0 2358.5 1484.7 2378 1468 Z" fill="#b4b4b4" opacity="1.0"/></g><g filter="url(#b5)"><path d="M1368 659 L1440 617 L1521 632 L1483 691 L1451 750 L1398 784 L1394 750 L1377 708 Z" fill="#e4e4e4" opacity="1.0"/><path d="M1398 778 C1391.7 782.5 1374.2 795.5 1360 805 C1345.8 814.5 1320.8 830.0 1313 835" stroke="#dedede" stroke-width="12" fill="none" stroke-linecap="round" stroke-linejoin="round" opacity="0.8"/></g><g filter="url(#b10)"><path d="M1420 640 C1435.0 628.3 1491.7 620.0 1500 630 C1508.3 640.0 1481.7 681.7 1470 700 C1458.3 718.3 1440.0 740.0 1430 740 C1420.0 740.0 1411.7 716.7 1410 700 C1408.3 683.3 1405.0 651.7 1420 640 Z" fill="#ececec" opacity="1.0"/></g><g filter="url(#b6)"><path d="M1225 683 C1230.8 683.8 1247.0 685.5 1260 688 C1273.0 690.5 1290.5 691.8 1303 698 C1315.5 704.2 1328.7 716.3 1335 725 C1341.3 733.7 1340.3 742.2 1341 750 C1341.7 757.8 1339.3 768.3 1339 772" stroke="#707070" stroke-width="18" fill="none" stroke-linecap="round" stroke-linejoin="round" opacity="0.8"/></g><g filter="url(#b25)"><path d="M1050 690 C1071.7 677.5 1168.3 680.0 1210 685 C1251.7 690.0 1278.3 700.8 1300 720 C1321.7 739.2 1340.0 776.7 1340 800 C1340.0 823.3 1326.7 853.3 1300 860 C1273.3 866.7 1216.7 856.7 1180 840 C1143.3 823.3 1101.7 785.0 1080 760 C1058.3 735.0 1028.3 702.5 1050 690 Z" fill="#a2a2a2" opacity="0.6"/></g><g filter="url(#b3)"><path d="M1530 632 C1558.3 631.7 1646.7 628.0 1700 630 C1753.3 632.0 1800.0 635.0 1850 644 C1900.0 653.0 1975.0 677.3 2000 684" stroke="#7a7a7a" stroke-width="8" fill="none" stroke-linecap="round" stroke-linejoin="round" opacity="0.7"/></g><g filter="url(#b8)"><path d="M1800 600 C1816.7 598.3 1862.5 618.0 1900 630 C1937.5 642.0 2005.0 660.3 2025 672 C2045.0 683.7 2040.8 700.7 2020 700 C1999.2 699.3 1936.7 678.0 1900 668 C1863.3 658.0 1816.7 651.3 1800 640 C1783.3 628.7 1783.3 601.7 1800 600 Z" fill="#a2a2a2" opacity="1.0"/></g><g filter="url(#b16)"><path d="M1466 640 C1504.3 618.3 1606.0 630.0 1660 630 C1714.0 630.0 1766.7 605.0 1790 640 C1813.3 675.0 1815.0 793.3 1800 840 C1785.0 886.7 1740.0 900.0 1700 920 C1660.0 940.0 1600.0 963.3 1560 960 C1520.0 956.7 1481.7 933.3 1460 900 C1438.3 866.7 1429.0 803.3 1430 760 C1431.0 716.7 1427.7 661.7 1466 640 Z" fill="#8c8c8c" opacity="0.8"/><path d="M1300 860 C1318.3 831.7 1373.3 791.7 1400 790 C1426.7 788.3 1453.3 816.7 1460 850 C1466.7 883.3 1461.7 960.0 1440 990 C1418.3 1020.0 1355.0 1035.0 1330 1030 C1305.0 1025.0 1295.0 988.3 1290 960 C1285.0 931.7 1281.7 888.3 1300 860 Z" fill="#969696" opacity="0.8"/><path d="M1180 690 C1213.3 676.7 1273.3 688.3 1300 700 C1326.7 711.7 1336.7 730.0 1340 760 C1343.3 790.0 1335.0 851.7 1320 880 C1305.0 908.3 1278.3 930.0 1250 930 C1221.7 930.0 1175.0 905.0 1150 880 C1125.0 855.0 1095.0 811.7 1100 780 C1105.0 748.3 1146.7 703.3 1180 690 Z" fill="#9c9c9c" opacity="0.7"/></g><g filter="url(#b5)"><path d="M1398 778 C1391.7 782.5 1374.2 795.5 1360 805 C1345.8 814.5 1326.3 824.2 1313 835 C1299.7 845.8 1285.5 864.2 1280 870" stroke="#dcdcdc" stroke-width="12" fill="none" stroke-linecap="round" stroke-linejoin="round" opacity="0.8"/></g><g filter="url(#b3)"><path d="M1545 638 L1600 634 L1642 636 L1600 720 L1570 800 L1552 898 L1520 860 L1490 800 L1471 731 L1490 690 L1530 660 Z" fill="#6a6a6a" opacity="0.95"/></g><g filter="url(#b2)"><path d="M1545 638 C1542.5 643.5 1539.2 660.7 1530 671 C1520.8 681.3 1499.8 690.5 1490 700 C1480.2 709.5 1473.3 716.8 1471 728 C1468.7 739.2 1471.2 750.7 1476 767 C1480.8 783.3 1490.2 808.2 1500 826 C1509.8 843.8 1526.3 862.0 1535 874 C1543.7 886.0 1549.2 894.0 1552 898" stroke="#3a3a3a" stroke-width="12" fill="none" stroke-linecap="round" stroke-linejoin="round" opacity="0.9"/></g><g filter="url(#b1)"><path d="M1560 650 C1556.7 661.7 1545.0 695.0 1540 720 C1535.0 745.0 1528.7 773.3 1530 800 C1531.3 826.7 1545.0 866.7 1548 880" stroke="#4a4a4a" stroke-width="4" fill="none" stroke-linecap="round" stroke-linejoin="round" opacity="0.75"/><path d="M1590 645 C1585.8 657.5 1570.8 694.2 1565 720 C1559.2 745.8 1556.7 786.7 1555 800" stroke="#4a4a4a" stroke-width="4" fill="none" stroke-linecap="round" stroke-linejoin="round" opacity="0.75"/><path d="M1520 680 C1516.7 690.0 1501.7 716.7 1500 740 C1498.3 763.3 1508.3 806.7 1510 820" stroke="#4a4a4a" stroke-width="4" fill="none" stroke-linecap="round" stroke-linejoin="round" opacity="0.75"/><path d="M1610 640 C1605.8 650.0 1591.7 678.3 1585 700 C1578.3 721.7 1572.5 758.3 1570 770" stroke="#4a4a4a" stroke-width="4" fill="none" stroke-linecap="round" stroke-linejoin="round" opacity="0.75"/><path d="M1575 650 C1571.2 661.7 1557.5 695.0 1552 720 C1546.5 745.0 1542.0 775.0 1542 800 C1542.0 825.0 1550.3 858.3 1552 870" stroke="#b8b8b8" stroke-width="4" fill="none" stroke-linecap="round" stroke-linejoin="round" opacity="0.6"/><path d="M1535 670 C1531.7 681.7 1517.2 715.0 1515 740 C1512.8 765.0 1520.8 806.7 1522 820" stroke="#b8b8b8" stroke-width="4" fill="none" stroke-linecap="round" stroke-linejoin="round" opacity="0.6"/><path d="M1600 648 C1596.3 658.3 1581.7 699.7 1578 710" stroke="#b8b8b8" stroke-width="4" fill="none" stroke-linecap="round" stroke-linejoin="round" opacity="0.6"/></g><g filter="url(#b3)"><path d="M1528 633 C1532.3 627.0 1554.3 628.3 1558 636 C1561.7 643.7 1554.3 673.0 1550 679 C1545.7 685.0 1535.7 679.7 1532 672 C1528.3 664.3 1523.7 639.0 1528 633 Z" fill="#333" opacity="0.8"/></g><g filter="url(#b4)"><path d="M1642 636 C1636.7 646.7 1620.3 677.7 1610 700 C1599.7 722.3 1587.5 748.3 1580 770 C1572.5 791.7 1569.2 808.7 1565 830 C1560.8 851.3 1556.7 886.7 1555 898" stroke="#e8e8e8" stroke-width="26" fill="none" stroke-linecap="round" stroke-linejoin="round" opacity="0.9"/></g><g filter="url(#b3)"><path d="M1659 636 L1700 632 L1750 636 L1760 700 L1765 780 L1761 826 L1738 767 L1702 719 L1678 683 Z" fill="#666" opacity="0.95"/></g><g filter="url(#b2)"><path d="M1659 636 C1662.2 643.8 1670.8 669.2 1678 683 C1685.2 696.8 1692.0 705.0 1702 719 C1712.0 733.0 1728.2 749.2 1738 767 C1747.8 784.8 1757.2 816.2 1761 826" stroke="#383838" stroke-width="12" fill="none" stroke-linecap="round" stroke-linejoin="round" opacity="0.9"/></g><g filter="url(#b1)"><path d="M1690 640 C1694.2 650.0 1705.0 676.7 1715 700 C1725.0 723.3 1744.2 766.7 1750 780" stroke="#4a4a4a" stroke-width="4" fill="none" stroke-linecap="round" stroke-linejoin="round" opacity="0.75"/><path d="M1720 640 C1723.3 651.7 1733.7 685.0 1740 710 C1746.3 735.0 1755.0 776.7 1758 790" stroke="#4a4a4a" stroke-width="4" fill="none" stroke-linecap="round" stroke-linejoin="round" opacity="0.75"/><path d="M1705 645 C1708.8 655.0 1720.2 684.2 1728 705 C1735.8 725.8 1748.0 759.2 1752 770" stroke="#4a4a4a" stroke-width="4" fill="none" stroke-linecap="round" stroke-linejoin="round" opacity="0.75"/><path d="M1697 642 C1701.2 652.0 1712.8 679.8 1722 702 C1731.2 724.2 1747.0 762.8 1752 775" stroke="#b8b8b8" stroke-width="4" fill="none" stroke-linecap="round" stroke-linejoin="round" opacity="0.6"/><path d="M1735 642 C1737.5 653.7 1747.5 700.3 1750 712" stroke="#b8b8b8" stroke-width="4" fill="none" stroke-linecap="round" stroke-linejoin="round" opacity="0.6"/></g><g filter="url(#b4)"><path d="M1752 640 C1751.3 653.3 1749.2 693.3 1748 720 C1746.8 746.7 1745.5 786.7 1745 800" stroke="#e2e2e2" stroke-width="16" fill="none" stroke-linecap="round" stroke-linejoin="round" opacity="0.85"/></g><g filter="url(#b3)"><path d="M1750 660 C1753.3 673.3 1764.2 714.3 1770 740 C1775.8 765.7 1782.5 801.7 1785 814" stroke="#4e4e4e" stroke-width="7" fill="none" stroke-linecap="round" stroke-linejoin="round" opacity="0.8"/></g><g filter="url(#b8)"><path d="M1620 720 C1624.2 703.3 1647.5 713.3 1655 730 C1662.5 746.7 1669.2 803.3 1665 820 C1660.8 836.7 1637.5 846.7 1630 830 C1622.5 813.3 1615.8 736.7 1620 720 Z" fill="#8a8a8a" opacity="0.7"/></g><g filter="url(#b5)"><path d="M1580 760 C1583.3 775.0 1593.3 818.3 1600 850 C1606.7 881.7 1616.7 933.3 1620 950" stroke="#e0e0e0" stroke-width="12" fill="none" stroke-linecap="round" stroke-linejoin="round" opacity="0.6"/></g><g filter="url(#b3)"><path d="M1397 787 L1420 795 L1440 860 L1430 940 L1400 978 L1385 930 L1379 859 Z" fill="#727272" opacity="0.9"/></g><g filter="url(#b2)"><path d="M1397 787 C1394.0 799.0 1379.0 833.8 1379 859 C1379.0 884.2 1393.5 918.2 1397 938 C1400.5 957.8 1399.5 971.3 1400 978" stroke="#3e3e3e" stroke-width="9" fill="none" stroke-linecap="round" stroke-linejoin="round" opacity="0.85"/><path d="M1415 860 C1415.8 866.7 1420.8 883.3 1420 900 C1419.2 916.7 1411.7 950.0 1410 960" stroke="#444" stroke-width="5" fill="none" stroke-linecap="round" stroke-linejoin="round" opacity="0.8"/></g><g filter="url(#b5)"><path d="M1339 872 L1350 880 L1345 950 L1325 1000 L1307 1017 L1310 950 Z" fill="#8a8a8a" opacity="0.8"/></g><g filter="url(#b2)"><path d="M1339 872 C1335.8 881.7 1325.2 905.8 1320 930 C1314.8 954.2 1310.0 1002.5 1308 1017" stroke="#505050" stroke-width="6" fill="none" stroke-linecap="round" stroke-linejoin="round" opacity="0.8"/></g><g filter="url(#b4)"><path d="M1420 860 C1421.3 870.8 1423.8 903.2 1428 925 C1432.2 946.8 1442.2 980.0 1445 991" stroke="#e8e8e8" stroke-width="18" fill="none" stroke-linecap="round" stroke-linejoin="round" opacity="0.8"/></g><g filter="url(#b3)"><path d="M1466 713 C1471.7 724.2 1489.3 758.8 1500 780 C1510.7 801.2 1522.0 822.5 1530 840 C1538.0 857.5 1545.0 877.5 1548 885" stroke="#5a5a5a" stroke-width="6" fill="none" stroke-linecap="round" stroke-linejoin="round" opacity="0.6"/></g><g filter="url(#b5)"><path d="M1820 648 C1829.3 631.7 1866.3 643.3 1878 662 C1889.7 680.7 1889.3 717.0 1890 760 C1890.7 803.0 1889.5 901.7 1882 920 C1874.5 938.3 1855.0 896.7 1845 870 C1835.0 843.3 1826.2 797.0 1822 760 C1817.8 723.0 1810.7 664.3 1820 648 Z" fill="#747474" opacity="0.85"/></g><g filter="url(#b2)"><path d="M1822 655 C1823.3 672.5 1824.5 725.8 1830 760 C1835.5 794.2 1846.8 832.2 1855 860 C1863.2 887.8 1875.0 915.8 1879 927" stroke="#404040" stroke-width="9" fill="none" stroke-linecap="round" stroke-linejoin="round" opacity="0.8"/></g><g filter="url(#b5)"><path d="M2078 742 C2085.3 730.3 2123.3 752.0 2132 770 C2140.7 788.0 2132.0 828.3 2130 850 C2128.0 871.7 2127.0 901.7 2120 900 C2113.0 898.3 2095.0 866.3 2088 840 C2081.0 813.7 2070.7 753.7 2078 742 Z" fill="#747474" opacity="0.85"/></g><g filter="url(#b2)"><path d="M2080 748 C2082.5 760.0 2088.8 794.5 2095 820 C2101.2 845.5 2113.3 887.5 2117 901" stroke="#404040" stroke-width="8" fill="none" stroke-linecap="round" stroke-linejoin="round" opacity="0.8"/></g><g filter="url(#b5)"><path d="M1952 690 C1957.8 674.2 1988.3 686.7 1995 705 C2001.7 723.3 1993.2 763.3 1992 800 C1990.8 836.7 1993.3 925.0 1988 925 C1982.7 925.0 1966.0 839.2 1960 800 C1954.0 760.8 1946.2 705.8 1952 690 Z" fill="#7e7e7e" opacity="0.8"/></g><g filter="url(#b2)"><path d="M1956 698 C1957.5 715.0 1959.7 762.2 1965 800 C1970.3 837.8 1984.2 904.2 1988 925" stroke="#444" stroke-width="7" fill="none" stroke-linecap="round" stroke-linejoin="round" opacity="0.75"/></g><g filter="url(#b5)"><path d="M2146 785 C2151.8 776.7 2179.7 785.8 2185 800 C2190.3 814.2 2180.0 854.3 2178 870 C2176.0 885.7 2177.7 897.3 2173 894 C2168.3 890.7 2154.5 868.2 2150 850 C2145.5 831.8 2140.2 793.3 2146 785 Z" fill="#7a7a7a" opacity="0.8"/></g><g filter="url(#b2)"><path d="M1861 660 C1862.2 670.0 1866.3 697.5 1868 720 C1869.7 742.5 1869.2 760.5 1871 795 C1872.8 829.5 1877.7 905.0 1879 927" stroke="#5a5a5a" stroke-width="5" fill="none" stroke-linecap="round" stroke-linejoin="round" opacity="0.75"/><path d="M1932 769 C1933.3 780.8 1937.3 818.0 1940 840 C1942.7 862.0 1946.7 890.8 1948 901" stroke="#5a5a5a" stroke-width="5" fill="none" stroke-linecap="round" stroke-linejoin="round" opacity="0.75"/><path d="M1985 716 C1986.2 728.3 1989.8 768.0 1992 790 C1994.2 812.0 1997.0 838.3 1998 848" stroke="#5a5a5a" stroke-width="5" fill="none" stroke-linecap="round" stroke-linejoin="round" opacity="0.75"/><path d="M2091 782 C2093.3 791.7 2100.7 820.2 2105 840 C2109.3 859.8 2115.0 890.8 2117 901" stroke="#5a5a5a" stroke-width="5" fill="none" stroke-linecap="round" stroke-linejoin="round" opacity="0.75"/><path d="M2157 769 C2157.8 777.5 2160.7 804.7 2162 820 C2163.3 835.3 2164.5 854.2 2165 861" stroke="#5a5a5a" stroke-width="5" fill="none" stroke-linecap="round" stroke-linejoin="round" opacity="0.75"/><path d="M1820 700 C1821.7 716.7 1829.7 770.0 1830 800 C1830.3 830.0 1823.3 866.7 1822 880" stroke="#5a5a5a" stroke-width="5" fill="none" stroke-linecap="round" stroke-linejoin="round" opacity="0.75"/></g><g filter="url(#b10)"><path d="M2065 782 C2072.8 763.7 2107.8 773.7 2117 790 C2126.2 806.3 2127.8 861.7 2120 880 C2112.2 898.3 2079.2 916.3 2070 900 C2060.8 883.7 2057.2 800.3 2065 782 Z" fill="#9c9c9c" opacity="0.7"/></g><g filter="url(#b5)"><path d="M1900 680 C1900.8 696.7 1902.5 743.3 1905 780 C1907.5 816.7 1913.3 880.0 1915 900" stroke="#dcdcdc" stroke-width="12" fill="none" stroke-linecap="round" stroke-linejoin="round" opacity="0.6"/><path d="M1960 700 C1960.8 716.7 1962.5 766.7 1965 800 C1967.5 833.3 1973.3 883.3 1975 900" stroke="#dcdcdc" stroke-width="12" fill="none" stroke-linecap="round" stroke-linejoin="round" opacity="0.6"/><path d="M2040 730 C2040.8 745.0 2043.3 791.7 2045 820 C2046.7 848.3 2049.2 886.7 2050 900" stroke="#dcdcdc" stroke-width="12" fill="none" stroke-linecap="round" stroke-linejoin="round" opacity="0.6"/><path d="M2140 760 C2139.2 775.0 2135.0 823.3 2135 850 C2135.0 876.7 2139.2 908.3 2140 920" stroke="#dcdcdc" stroke-width="12" fill="none" stroke-linecap="round" stroke-linejoin="round" opacity="0.6"/></g><g filter="url(#b25)"><path d="M1600 1120 C1646.7 1095.0 1820.0 1105.0 1900 1110 C1980.0 1115.0 2050.0 1111.0 2080 1150 C2110.0 1189.0 2101.7 1302.3 2080 1344 C2058.3 1385.7 2000.0 1397.3 1950 1400 C1900.0 1402.7 1835.0 1383.3 1780 1360 C1725.0 1336.7 1650.0 1300.0 1620 1260 C1590.0 1220.0 1553.3 1145.0 1600 1120 Z" fill="#aeaeae" opacity="0.7"/></g><g filter="url(#b8)"><path d="M1714 1133 C1719.5 1123.0 1745.3 1127.2 1753 1140 C1760.7 1152.8 1765.5 1200.0 1760 1210 C1754.5 1220.0 1727.7 1212.8 1720 1200 C1712.3 1187.2 1708.5 1143.0 1714 1133 Z" fill="#8a8a8a" opacity="0.8"/></g><g filter="url(#b6)"><path d="M1772 1248 C1777.8 1241.8 1802.8 1243.0 1810 1250 C1817.2 1257.0 1820.8 1283.8 1815 1290 C1809.2 1296.2 1782.2 1294.0 1775 1287 C1767.8 1280.0 1766.2 1254.2 1772 1248 Z" fill="#888" opacity="0.8"/></g><g filter="url(#b8)"><path d="M1810 1145 C1815.7 1130.0 1842.3 1132.8 1849 1150 C1855.7 1167.2 1855.7 1233.0 1850 1248 C1844.3 1263.0 1821.7 1257.2 1815 1240 C1808.3 1222.8 1804.3 1160.0 1810 1145 Z" fill="#969696" opacity="0.7"/><path d="M1600 1172 C1615.0 1167.0 1680.0 1172.8 1695 1180 C1710.0 1187.2 1705.0 1210.0 1690 1215 C1675.0 1220.0 1620.0 1217.2 1605 1210 C1590.0 1202.8 1585.0 1177.0 1600 1172 Z" fill="#959595" opacity="0.7"/></g><g filter="url(#b10)"><path d="M1925 1126 C1940.2 1111.0 2005.2 1112.8 2021 1130 C2036.8 1147.2 2035.2 1214.0 2020 1229 C2004.8 1244.0 1945.8 1237.2 1930 1220 C1914.2 1202.8 1909.8 1141.0 1925 1126 Z" fill="#a8a8a8" opacity="0.7"/></g><g filter="url(#b8)"><path d="M1480 1130 C1489.2 1123.3 1530.8 1126.7 1540 1135 C1549.2 1143.3 1544.2 1173.3 1535 1180 C1525.8 1186.7 1494.2 1183.3 1485 1175 C1475.8 1166.7 1470.8 1136.7 1480 1130 Z" fill="#9a9a9a" opacity="0.6"/></g><g filter="url(#b4)"><path d="M1906 1248 C1905.0 1256.7 1897.7 1279.7 1900 1300 C1902.3 1320.3 1909.3 1349.8 1920 1370 C1930.7 1390.2 1949.0 1416.0 1964 1421 C1979.0 1426.0 1997.3 1406.3 2010 1400 C2022.7 1393.7 2031.7 1392.3 2040 1383 C2048.3 1373.7 2056.7 1350.5 2060 1344" stroke="#8c8c8c" stroke-width="10" fill="none" stroke-linecap="round" stroke-linejoin="round" opacity="0.8"/><path d="M1890 1250 C1889.2 1260.0 1882.5 1287.5 1885 1310 C1887.5 1332.5 1892.5 1363.3 1905 1385 C1917.5 1406.7 1940.8 1435.0 1960 1440 C1979.2 1445.0 2004.2 1422.5 2020 1415 C2035.8 1407.5 2049.2 1398.3 2055 1395" stroke="#e4e4e4" stroke-width="8" fill="none" stroke-linecap="round" stroke-linejoin="round" opacity="0.6"/><path d="M2040 1325 C2036.7 1332.5 2026.3 1357.2 2020 1370 C2013.7 1382.8 2014.7 1391.5 2002 1402 C1989.3 1412.5 1953.7 1427.8 1944 1433" stroke="#888" stroke-width="8" fill="none" stroke-linecap="round" stroke-linejoin="round" opacity="0.6"/><path d="M2213 1172 C2200.8 1181.7 2165.5 1210.8 2140 1230 C2114.5 1249.2 2073.3 1277.5 2060 1287" stroke="#e8e8e8" stroke-width="12" fill="none" stroke-linecap="round" stroke-linejoin="round" opacity="0.8"/></g><g filter="url(#b3)"><path d="M2213 1185 C2200.8 1195.0 2165.5 1225.8 2140 1245 C2114.5 1264.2 2073.3 1290.8 2060 1300" stroke="#8e8e8e" stroke-width="6" fill="none" stroke-linecap="round" stroke-linejoin="round" opacity="0.7"/><path d="M1420 1000 C1430.0 1010.0 1460.0 1040.0 1480 1060 C1500.0 1080.0 1530.0 1110.0 1540 1120" stroke="#9c9c9c" stroke-width="5" fill="none" stroke-linecap="round" stroke-linejoin="round" opacity="0.5"/><path d="M1560 1000 C1570.0 1010.0 1600.0 1041.7 1620 1060 C1640.0 1078.3 1670.0 1101.7 1680 1110" stroke="#9c9c9c" stroke-width="5" fill="none" stroke-linecap="round" stroke-linejoin="round" opacity="0.5"/><path d="M1700 1010 C1710.0 1018.3 1740.0 1045.0 1760 1060 C1780.0 1075.0 1810.0 1093.3 1820 1100" stroke="#9c9c9c" stroke-width="5" fill="none" stroke-linecap="round" stroke-linejoin="round" opacity="0.5"/><path d="M1850 1010 C1858.3 1018.3 1883.3 1045.0 1900 1060 C1916.7 1075.0 1941.7 1093.3 1950 1100" stroke="#9c9c9c" stroke-width="5" fill="none" stroke-linecap="round" stroke-linejoin="round" opacity="0.5"/></g><g filter="url(#b8)"><path d="M2120 1090 C2126.7 1116.7 2158.3 1201.7 2160 1250 C2161.7 1298.3 2141.7 1343.3 2130 1380 C2118.3 1416.7 2096.7 1455.0 2090 1470" stroke="#9a9a9a" stroke-width="12" fill="none" stroke-linecap="round" stroke-linejoin="round" opacity="0.6"/></g><g filter="url(#b12)"><path d="M2251 1436 C2265.5 1432.8 2311.7 1418.8 2338 1417 C2364.3 1415.2 2390.5 1420.5 2409 1425 C2427.5 1429.5 2435.7 1434.8 2449 1444 C2462.3 1453.2 2477.2 1466.0 2489 1480 C2500.8 1494.0 2511.5 1514.7 2520 1528 C2528.5 1541.3 2536.7 1554.7 2540 1560" stroke="#8a8a8a" stroke-width="46" fill="none" stroke-linecap="round" stroke-linejoin="round" opacity="0.9"/></g><g filter="url(#b6)"><path d="M2360 1420 C2370.0 1422.0 2401.7 1423.7 2420 1432 C2438.3 1440.3 2455.0 1455.3 2470 1470 C2485.0 1484.7 2499.2 1505.8 2510 1520 C2520.8 1534.2 2530.8 1549.2 2535 1555" stroke="#6e6e6e" stroke-width="20" fill="none" stroke-linecap="round" stroke-linejoin="round" opacity="0.8"/><path d="M2576 1595 C2595.8 1607.0 2661.8 1645.2 2695 1667 C2728.2 1688.8 2751.8 1707.5 2775 1726 C2798.2 1744.5 2824.2 1769.3 2834 1778" stroke="#8e8e8e" stroke-width="16" fill="none" stroke-linecap="round" stroke-linejoin="round" opacity="0.75"/></g><g filter="url(#b4)"><path d="M2600 1528 C2626.7 1538.3 2698.3 1566.8 2760 1590 C2821.7 1613.2 2935.0 1654.2 2970 1667" stroke="#9a9a9a" stroke-width="8" fill="none" stroke-linecap="round" stroke-linejoin="round" opacity="0.7"/></g><g filter="url(#b10)"><ellipse cx="2760" cy="1330" rx="40" ry="25" fill="#b2b2b2" opacity="0.7"/><ellipse cx="2840" cy="1400" rx="50" ry="30" fill="#b6b6b6" opacity="0.7"/><ellipse cx="2950" cy="1350" rx="40" ry="30" fill="#e0e0e0" opacity="0.6"/><ellipse cx="3050" cy="1420" rx="45" ry="25" fill="#b8b8b8" opacity="0.6"/><ellipse cx="2900" cy="1480" rx="60" ry="30" fill="#bcbcbc" opacity="0.6"/><ellipse cx="2720" cy="1450" rx="40" ry="30" fill="#dcdcdc" opacity="0.6"/><ellipse cx="3100" cy="1300" rx="40" ry="40" fill="#dadada" opacity="0.6"/><ellipse cx="2680" cy="1200" rx="60" ry="40" fill="#b8b8b8" opacity="0.6"/><ellipse cx="2980" cy="1240" rx="50" ry="30" fill="#c0c0c0" opacity="0.6"/></g><g filter="url(#b3)"><path d="M2442 1091 C2468.3 1089.2 2546.7 1083.5 2600 1080 C2653.3 1076.5 2714.7 1073.3 2762 1070 C2809.3 1066.7 2863.7 1061.7 2884 1060" stroke="#8a8a8a" stroke-width="6" fill="none" stroke-linecap="round" stroke-linejoin="round" opacity="0.8"/></g><g filter="url(#b5)"><path d="M2456 1060 C2480.0 1058.3 2549.0 1052.5 2600 1050 C2651.0 1047.5 2735.0 1045.8 2762 1045" stroke="#dedede" stroke-width="10" fill="none" stroke-linecap="round" stroke-linejoin="round" opacity="0.6"/></g><g filter="url(#b16)"><path d="M2433 921 C2415.8 944.2 2361.5 1012.8 2330 1060 C2298.5 1107.2 2258.3 1180.0 2244 1204" stroke="#b4b4b4" stroke-width="20" fill="none" stroke-linecap="round" stroke-linejoin="round" opacity="0.6"/></g><rect x="900" y="450" width="2400" height="1450" filter="url(#relief)" opacity="0.22" style="mix-blend-mode:overlay"/><rect x="900" y="450" width="2400" height="1450" filter="url(#mottle)" opacity="0.08"/><rect x="900" y="450" width="2400" height="1450" filter="url(#grain)" opacity="0.25"/></g>
</g></svg><div style="position:absolute;left:1962px;top:1928px;width:270px;height:72px;border-radius:26px;background:#1f1f1f"></div><svg style="position:absolute;left:1970px;top:1938px" width="260" height="52" viewBox="0 0 260 52"><g fill="#ee1a8c"><rect x="9.5" y="4" width="4" height="44"/><rect x="23" y="4" width="4" height="44"/><rect x="36.5" y="4" width="4" height="44"/><rect x="4" y="10" width="42" height="4"/><rect x="4" y="24" width="42" height="4"/><rect x="4" y="38" width="42" height="4"/></g><path d="M70 46 L112 46 L112 4 M70 46 Q88 46 97 40 Q111 30 112 5" stroke="#8f8f8f" stroke-width="4" fill="none"/><path d="M140 26 A20 20 0 1 0 146 11.7" stroke="#8f8f8f" stroke-width="4" fill="none"/><path d="M140.5 4.5 L140.5 19.5 L155.5 18 Z" fill="#8f8f8f"/><path d="M220.5 6 L233.5 6 L233.5 23 L241.5 23 L227 39 L212.5 23 L220.5 23 Z" stroke="#8f8f8f" stroke-width="4" fill="none" stroke-linejoin="miter"/><rect x="211" y="44.5" width="32" height="3.6" fill="#8f8f8f"/></svg><div style="position:absolute;left:830px;top:2048px;width:2530px;height:52px;background:rgba(28,28,28,0.96)"></div><div class="t" style="left:844px;top:2063.2px;font-size:22.2px;color:#e2e2e2;font-weight:normal;">Grid : 10,000m</div>
<div class="t" style="right:13px;top:2063.1px;font-size:22.3px;color:#e2e2e2;font-weight:normal;">Vertical Range : 1967m</div>

</body></html>
